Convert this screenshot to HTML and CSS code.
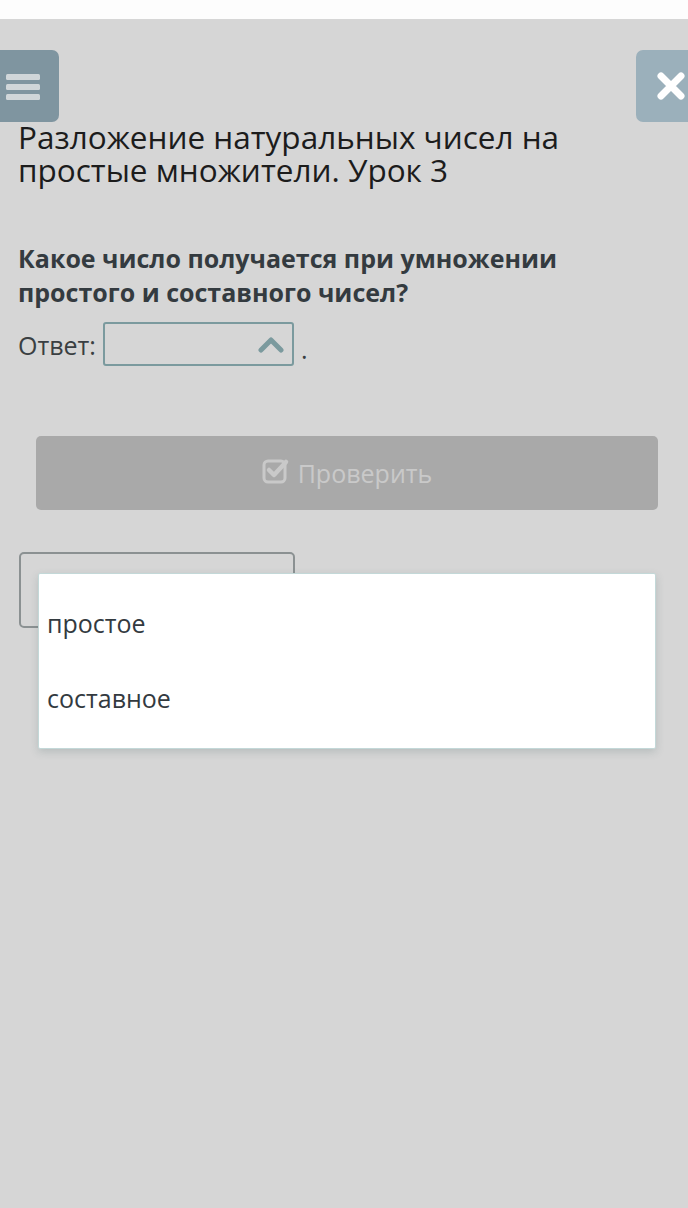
FILE: index.html
```html
<!DOCTYPE html>
<html>
<head>
<meta charset="utf-8">
<title>Урок 3</title>
<link rel="stylesheet" href="styles.css">
</head>
<body>
<div class="statusbar"></div>
<main class="page">
    <div class="toolbar">
        <button class="tool menu" aria-label="Меню">
            <svg width="34" height="28" viewBox="0 0 34 28"><rect x="0" y="2" width="34" height="6" rx="1.5"/><rect x="0" y="12" width="34" height="6" rx="1.5"/><rect x="0" y="22" width="34" height="6" rx="1.5"/></svg>
        </button>
        <button class="tool close" aria-label="Закрыть">
            <svg width="30" height="30" viewBox="0 0 30 30"><path d="M5 5 L25 25 M25 5 L5 25"/></svg>
        </button>
    </div>
    <h1>Разложение натуральных чисел на простые множители. Урок 3</h1>
    <p class="question">Какое число получается при умножении простого и составного чисел?</p>
    <div class="answer">
        <span class="label">Ответ:</span>
        <div class="select">
            <svg width="26" height="18" viewBox="0 0 26 18"><path d="M3 15 L13 5 L23 15"/></svg>
        </div>
        <span class="dot">.</span>
    </div>
    <button class="check">
        <svg width="28" height="28" viewBox="0 0 28 28"><rect x="2" y="4" width="21" height="21" rx="4"/><path class="tick" d="M7 13 L12 18 L24 5"/></svg>
        Проверить
    </button>
    <div class="below">
        <div class="ghost"></div>
        <ul class="dropdown">
            <li>простое</li>
            <li>составное</li>
        </ul>
    </div>
</main>
</body>
</html>
```

FILE: styles.css
```css
body {
    margin: 0;
    background: #d6d6d6;
    font-family: "Open Sans", sans-serif;
    color: #333a3f;
    height: 1208px;
    overflow: hidden;
}

.statusbar {
    height: 19px;
    background: #fdfdfd;
}

.page {
    padding-top: 31px;
}

.toolbar {
    display: flex;
    justify-content: space-between;
    height: 72px;
}

.tool {
    border: none;
    padding: 0;
    height: 72px;
    display: flex;
    align-items: center;
}

.menu {
    width: 59px;
    background: #7f95a0;
    border-radius: 0 7px 7px 0;
    padding-left: 6px;
}

.menu svg {
    fill: #d0d6d9;
}

.close {
    width: 52px;
    background: #9bb0bb;
    border-radius: 7px 0 0 7px;
    padding-left: 20px;
}

.close svg {
    stroke: #fff;
    stroke-width: 7;
    stroke-linecap: round;
    fill: none;
}

h1 {
    margin: -2px 0 0;
    padding: 0 18px;
    font-weight: normal;
    font-size: 31.5px;
    line-height: 33px;
    color: #1c1c1c;
    max-width: 580px;
}

.question {
    margin: 55px 0 0;
    padding: 0 18px;
    font-weight: bold;
    font-size: 25px;
    line-height: 34px;
    color: #343b40;
    max-width: 580px;
}

.answer {
    display: flex;
    align-items: flex-start;
    gap: 7px;
    margin: 13px 0 0 18px;
    font-size: 25px;
    color: #3a3f42;
}

.label {
    padding-top: 6px;
}

.dot {
    padding-top: 10px;
}

.select {
    width: 179px;
    height: 40px;
    border: 2px solid #7b9a9e;
    border-radius: 3px;
    display: flex;
    justify-content: flex-end;
    align-items: center;
    padding-right: 8px;
}

.select svg {
    stroke: #7b9a9e;
    stroke-width: 5;
    stroke-linecap: round;
    stroke-linejoin: round;
    fill: none;
}

.check {
    display: flex;
    justify-content: center;
    align-items: center;
    gap: 8px;
    width: 622px;
    height: 74px;
    margin: 70px 0 0 36px;
    border: none;
    border-radius: 5px;
    background: #a9a9a9;
    color: #c9c9c9;
    font-family: "Open Sans", sans-serif;
    font-size: 25px;
}

.check svg {
    fill: none;
    stroke: #c9c9c9;
    stroke-width: 3;
    margin-top: -4px;
}

.check .tick {
    stroke-width: 4.5;
    stroke-linecap: round;
    stroke-linejoin: round;
}

.below {
    position: relative;
    margin: 42px 0 0 19px;
}

.ghost {
    width: 272px;
    height: 72px;
    border: 2px solid #8b9192;
    border-radius: 5px;
}

.dropdown {
    position: absolute;
    top: 21px;
    left: 19px;
    width: 616px;
    margin: 0;
    padding: 13px 0 11px;
    list-style: none;
    background: #fff;
    border: 1px solid #c3d8d8;
    border-radius: 2px;
    box-shadow: 0 3px 8px rgba(60, 90, 90, 0.2);
}

.dropdown li {
    padding: 0 8px;
    height: 75px;
    line-height: 72px;
    font-size: 25px;
    color: #333a3f;
}
```
